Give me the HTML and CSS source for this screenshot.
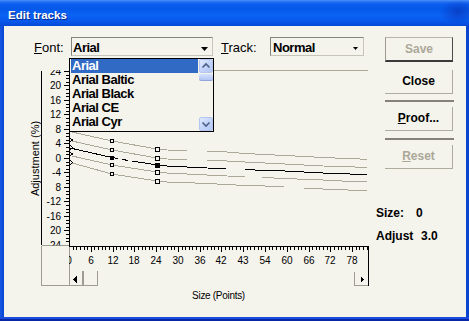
FILE: index.html
```html
<!DOCTYPE html>
<html>
<head>
<meta charset="utf-8">
<title>Edit tracks</title>
<link rel="stylesheet" href="styles.css">
</head>
<body>
<div class="window">
  <div class="titlebar"><span class="title">Edit tracks</span></div>
  <div class="client">
    <div class="main">
      <div class="toprow">
        <span class="lbl lbl-font"><u>F</u>ont:</span>
        <div class="combo combo-font">
          <span class="combo-text">Arial</span>
          <svg class="combo-arrow arrow-lg" width="7" height="4" viewBox="0 0 7 4"><polygon points="0,0 7,0 3.5,4" fill="#000"/></svg>
          <div class="droplist">
            <div class="items">
              <div class="item sel">Arial</div>
              <div class="item">Arial Baltic</div>
              <div class="item">Arial Black</div>
              <div class="item">Arial CE</div>
              <div class="item">Arial Cyr</div>
            </div>
            <div class="vscroll">
              <div class="sbtn"><svg width="12" height="12" viewBox="0 0 12 12"><path d="M2.5 7.5L6 4L9.5 7.5" fill="none" stroke="#4d6185" stroke-width="1.6"/></svg></div>
              <div class="thumb"></div>
              <div class="track"></div>
              <div class="sbtn"><svg width="12" height="12" viewBox="0 0 12 12"><path d="M2.5 4.5L6 8L9.5 4.5" fill="none" stroke="#4d6185" stroke-width="1.6"/></svg></div>
            </div>
          </div>
        </div>
        <span class="lbl lbl-track"><u>T</u>rack:</span>
        <div class="combo combo-track">
          <span class="combo-text">Normal</span>
          <svg class="combo-arrow arrow-sm" width="5" height="3" viewBox="0 0 5 3"><polygon points="0,0 5,0 2.5,3" fill="#000"/></svg>
        </div>
      </div>
      <svg class="plot" width="368" height="258" viewBox="4 58 368 258">
        <defs>
          <clipPath id="cy"><rect x="36" y="70" width="33" height="175.5"/></clipPath>
          <clipPath id="cx"><rect x="69" y="250" width="300" height="20"/></clipPath>
        </defs>
        <g shape-rendering="crispEdges" fill="none">
          <path class="grid" d="M69 70.5H368"/>
          <path class="ink" d="M41.5 71V245M69.5 70V246M69 246.5H369M368.5 246V285.5"/>
          <path class="boxline" d="M41.5 245.5H69M41.5 245.5V285.5M69.5 247V285.5M41 285.5H98M82.5 271V285M83.5 271V285M97.5 271V285M354.5 272V285M354 285.5H368"/>
          <path class="ink" d="M64 71.5h5M66 75.5h3M66 78.5h3M66 82.5h3M64 85.5h5M66 89.5h3M66 93.5h3M66 96.5h3M64 100.5h5M66 104.5h3M66 107.5h3M66 111.5h3M64 114.5h5M66 118.5h3M66 122.5h3M66 125.5h3M64 129.5h5M66 133.5h3M66 136.5h3M66 140.5h3M64 143.5h5M66 147.5h3M66 151.5h3M66 154.5h3M64 158.5h5M66 162.5h3M66 165.5h3M66 169.5h3M64 172.5h5M66 176.5h3M66 180.5h3M66 183.5h3M64 187.5h5M66 191.5h3M66 194.5h3M66 198.5h3M64 201.5h5M66 205.5h3M66 209.5h3M66 212.5h3M64 216.5h5M66 220.5h3M66 223.5h3M66 227.5h3M64 230.5h5M66 234.5h3M66 238.5h3M66 241.5h3"/>
          <path class="ink" d="M73.5 247v3M76.5 247v3M80.5 247v3M84.5 247v3M87.5 247v3M91.5 247v5M94.5 247v3M98.5 247v3M102.5 247v3M105.5 247v3M109.5 247v3M113.5 247v5M116.5 247v3M120.5 247v3M123.5 247v3M127.5 247v3M131.5 247v3M134.5 247v5M138.5 247v3M142.5 247v3M145.5 247v3M149.5 247v3M152.5 247v3M156.5 247v5M160.5 247v3M163.5 247v3M167.5 247v3M171.5 247v3M174.5 247v3M178.5 247v5M182.5 247v3M185.5 247v3M189.5 247v3M192.5 247v3M196.5 247v3M200.5 247v5M203.5 247v3M207.5 247v3M211.5 247v3M214.5 247v3M218.5 247v3M221.5 247v5M225.5 247v3M229.5 247v3M232.5 247v3M236.5 247v3M240.5 247v3M243.5 247v5M247.5 247v3M250.5 247v3M254.5 247v3M258.5 247v3M261.5 247v3M265.5 247v5M269.5 247v3M272.5 247v3M276.5 247v3M280.5 247v3M283.5 247v3M287.5 247v5M290.5 247v3M294.5 247v3M298.5 247v3M301.5 247v3M305.5 247v3M309.5 247v5M312.5 247v3M316.5 247v3M319.5 247v3M323.5 247v3M327.5 247v3M330.5 247v5M334.5 247v3M338.5 247v3M341.5 247v3M345.5 247v3M349.5 247v3M352.5 247v5M356.5 247v3M359.5 247v3M363.5 247v3M367.5 247v3"/>
          <path class="grid" d="M72 132L112 141L157 149L167 150L187 150.5M207 151L227 152L245 153.5L265 154.5L285 155.5L304 156.5L323 157.5L342 158.3L367 159.3"/>
          <path class="grid" d="M72 141L112 150L157 158L167 159L187 159.5M207 160L227 161L245 162L265 163L285 164L304 165L323 166L342 166.5L367 167.5"/>
          <path class="grid" d="M72 156L112 165L157 172L167 173L187 174L207 175L227 176L245 176.5M262 177.5L285 178.5L304 179.3L323 180L342 181L367 182"/>
          <path class="grid" d="M72 163L112 174L157 181L167 182L187 182.7L207 183.5L227 184.5L245 185.5L284 186.5M304 188L323 189L342 189.7L367 191"/>
          <path class="ink" d="M70 148L112 157.5L118 158.5M122 159.3L128 160.5M132 161L157 165L167 166L187 167L207 168L226 168.5M245 169.5L265 170.5L285 171L304 172L323 173L342 173.7L367 174.7"/>
          <path class="ink" d="M69.5 137.5L72.5 140L69.5 142.5M69.5 145L72.5 147.5L69.5 150M69.5 151.5L72.5 154L69.5 156.5M69.5 160L72.5 162.5L69.5 165"/>
          <g class="pt">
            <rect x="110.5" y="139.5" width="3" height="3"/>
            <rect x="110.5" y="148.5" width="3" height="3"/>
            <rect x="110.5" y="163.5" width="3" height="3"/>
            <rect x="110.5" y="172.5" width="3" height="3"/>
            <rect x="155.5" y="147.5" width="4" height="4"/>
            <rect x="155.5" y="156.5" width="4" height="4"/>
            <rect x="155.5" y="170.5" width="4" height="4"/>
            <rect x="155.5" y="179.5" width="4" height="4"/>
          </g>
          <rect class="ptf" x="110" y="155.5" width="4" height="4"/>
          <rect class="ptf" x="155" y="163" width="5" height="5"/>
          <polygon class="arr" points="73,279.5 77,275.5 77,283.5"/>
          <polygon class="arr" points="361,276.5 364,279.5 361,282.5"/>
        </g>
        <g class="ax ylab" clip-path="url(#cy)">
          <text x="61" y="74.5">24</text>
          <text x="61" y="88.5">20</text>
          <text x="61" y="103.5">16</text>
          <text x="61" y="117.5">12</text>
          <text x="61" y="132.5">8</text>
          <text x="61" y="146.5">4</text>
          <text x="61" y="161.5">0</text>
          <text x="61" y="175.5">-4</text>
          <text x="61" y="190.5">8</text>
          <text x="61" y="204.5">-12</text>
          <text x="61" y="219.5">-16</text>
          <text x="61" y="233.5">20</text>
          <text x="61" y="248.5">24</text>
        </g>
        <g class="ax xlab" clip-path="url(#cx)">
          <text x="69" y="263.5">0</text>
          <text x="91" y="263.5">6</text>
          <text x="113" y="263.5">12</text>
          <text x="134" y="263.5">18</text>
          <text x="156" y="263.5">24</text>
          <text x="178" y="263.5">30</text>
          <text x="200" y="263.5">36</text>
          <text x="221" y="263.5">42</text>
          <text x="243" y="263.5">43</text>
          <text x="265" y="263.5">54</text>
          <text x="287" y="263.5">60</text>
          <text x="309" y="263.5">66</text>
          <text x="330" y="263.5">72</text>
          <text x="352" y="263.5">78</text>
        </g>
        <text class="axtitle" x="38.5" y="158.5" transform="rotate(-90 38.5 158.5)">Adjustment (%)</text>
        <text class="axtitle xt" x="218.5" y="298.5">Size (Points)</text>
      </svg>
    </div>
    <div class="side">
      <div class="btn btn-default disabled">Save</div>
      <div class="btn btn-close">Close</div>
      <div class="sep"></div>
      <div class="btn"><u>P</u>roof...</div>
      <div class="sep sep-2"></div>
      <div class="btn disabled"><u>R</u>eset</div>
      <div class="info">
        <div class="info-row"><span class="info-key">Size:</span><span>0</span></div>
        <div class="info-row info-row-2"><span class="info-key info-key-wide">Adjust</span><span>3.0</span></div>
      </div>
    </div>
  </div>
</div>
</body>
</html>
```

FILE: styles.css
```css
html, body {
  margin: 0;
  padding: 0;
}

body {
  width: 469px;
  height: 321px;
  overflow: hidden;
  background: #0b4bd8;
  font-family: "Liberation Sans", Arial, sans-serif;
  color: #000;
}

.window {
  width: 469px;
  height: 321px;
  display: flex;
  flex-direction: column;
  background:
    linear-gradient(to top, #0727a6 0, #0727a6 2px, #1a4bdc 2px, #1a4bdc 4px, transparent 4px),
    linear-gradient(to right, #1453de 0, #1453de 2px, #0a49d6 2px, #0a49d6 4px, transparent 4px),
    #0a45d0;
}

.titlebar {
  height: 26px;
  flex: none;
  box-sizing: border-box;
  padding: 8px 0 0 8px;
  background:
    radial-gradient(ellipse 18px 12px at 458px 12px, rgba(10, 40, 170, 0.55), rgba(10, 40, 170, 0) 100%),
    linear-gradient(#4a8ef8 0, #2470f3 2px, #0b5eee 4px, #0559ea 9px, #0b62f3 15px, #0759ec 21px, #0549d6 26px);
}

.title {
  display: block;
  color: #fff;
  font-weight: bold;
  font-size: 11.5px;
  line-height: 14px;
  text-shadow: 1px 1px 0 #0b2a8a;
}

.client {
  flex: 1;
  margin: 0 3px 4px 4px;
  box-sizing: border-box;
  padding-top: 11px;
  background: #f4f3ec;
  display: flex;
}

.main {
  flex: none;
  width: 368px;
  display: flex;
  flex-direction: column;
}

.toprow {
  display: flex;
  align-items: flex-start;
  height: 19px;
  padding-left: 30px;
}

.lbl {
  font-size: 13px;
  line-height: 14px;
  padding-top: 4px;
  white-space: nowrap;
}

.lbl-font {
  width: 37px;
}

.lbl-track {
  width: 49px;
  margin-left: 8px;
}

.combo {
  position: relative;
  box-sizing: border-box;
  height: 19px;
  border: 1px solid;
  border-color: #858479 #c7c5b9 #c7c5b9 #858479;
  display: flex;
  align-items: flex-start;
}

.combo-font {
  width: 142px;
}

.combo-track {
  width: 94px;
}

.combo-text {
  flex: 1;
  font-size: 13px;
  font-weight: bold;
  letter-spacing: -0.5px;
  line-height: 14px;
  padding: 3px 0 0 1px;
  white-space: nowrap;
}

.combo-track .combo-text {
  padding-left: 2px;
}

.combo-arrow {
  display: block;
  flex: none;
}

.arrow-lg {
  margin: 9px 4px 0 0;
}

.arrow-sm {
  margin: 9px 5px 0 0;
}

.droplist {
  position: absolute;
  left: -3px;
  top: 20px;
  width: 145px;
  height: 74px;
  box-sizing: border-box;
  border: 1px solid #000;
  background: #f4f3ec;
  padding-left: 1px;
  display: flex;
  z-index: 2;
}

.items {
  width: 127px;
  flex: none;
}

.item {
  height: 14px;
  font-size: 13px;
  font-weight: bold;
  letter-spacing: -0.5px;
  line-height: 14px;
  padding-left: 1px;
  white-space: nowrap;
  overflow: hidden;
}

.item.sel {
  background: #316ac5;
  color: #fff;
}

.vscroll {
  width: 14px;
  margin-left: 1px;
  flex: none;
  display: flex;
  flex-direction: column;
}

.sbtn {
  height: 14px;
  box-sizing: border-box;
  border: 1px solid #b4c6f0;
  border-radius: 2px;
  background: linear-gradient(135deg, #e2ebfe 0, #c6d6fb 45%, #b3c8f6 100%);
  display: flex;
  align-items: center;
  justify-content: center;
}

.sbtn svg {
  display: block;
}

.thumb {
  height: 7px;
  margin-top: 1px;
  box-sizing: border-box;
  border-radius: 2px;
  background: linear-gradient(#d6e2fd, #b0c5f4);
  border-bottom: 1px solid #8fa7dc;
}

.track {
  flex: 1;
}

.plot {
  display: block;
  margin-top: 2px;
  width: 368px;
  height: 258px;
}

.grid {
  stroke: #aca899;
  stroke-width: 1;
}

.ink {
  stroke: #000;
  stroke-width: 1;
}

.boxline {
  stroke: #9e9c90;
  stroke-width: 1;
}

.pt rect {
  fill: #f4f3ec;
  stroke: #000;
  stroke-width: 1;
}

.ptf {
  fill: #000;
}

.arr {
  fill: #000;
}

.ax {
  font-family: "Liberation Sans", Arial, sans-serif;
  font-size: 10px;
  fill: #000;
}

.ylab {
  text-anchor: end;
}

.xlab {
  text-anchor: middle;
}

.axtitle {
  font-family: "Liberation Sans", Arial, sans-serif;
  font-size: 11px;
  fill: #000;
  text-anchor: middle;
}

.xt {
  font-size: 10px;
  letter-spacing: -0.3px;
}

.side {
  margin-left: 4px;
  width: 86px;
  display: flex;
  flex-direction: column;
}

.btn {
  margin-left: 9px;
  width: 68px;
  height: 24px;
  box-sizing: border-box;
  border-right: 1px solid #aeac9f;
  border-bottom: 1px solid #aeac9f;
  font-size: 12px;
  font-weight: bold;
  line-height: 23px;
  text-align: center;
  white-space: nowrap;
}

.btn-default {
  height: 25px;
  border-top: 1px solid #b8b6aa;
  border-left: 1px solid #9c9a8e;
  border-right: 1px solid #4a4a4a;
  border-bottom: 2px solid #3a3a3a;
  line-height: 22px;
}

.btn-close {
  margin-top: 8px;
}

.disabled {
  color: #aca899;
}

.sep {
  margin: 6px 0 5px 9px;
  width: 69px;
  height: 2px;
  background: #858377;
}

.sep-2 {
  margin-top: 7px;
}

.info {
  margin-top: 37px;
  font-size: 12px;
  font-weight: bold;
  line-height: 14px;
}

.info-row {
  display: flex;
  white-space: nowrap;
}

.info-row-2 {
  margin-top: 9px;
}

.info-key {
  width: 40px;
}

.info-key-wide {
  width: 45px;
}
```
